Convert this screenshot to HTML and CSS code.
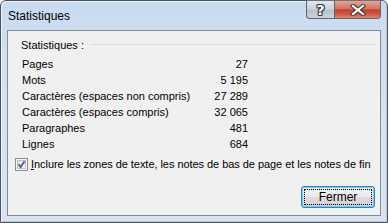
FILE: index.html
```html
<!DOCTYPE html>
<html lang="fr">
<head>
<meta charset="utf-8">
<title>Statistiques</title>
<link rel="stylesheet" href="styles.css">
</head>
<body>
<div class="window">
  <div class="titlebar">
    <div class="title">Statistiques</div>
    <div class="caption-buttons">
      <div class="cap-btn help"><span class="help-glyph">?</span></div>
      <div class="cap-btn close">
        <svg width="16" height="12" viewBox="0 0 16 12">
          <path d="M3 2 L13 10 M13 2 L3 10" stroke="#3b3b3b" stroke-width="4.2" stroke-linecap="square" fill="none"/>
          <path d="M3 2 L13 10 M13 2 L3 10" stroke="#ffffff" stroke-width="2.2" stroke-linecap="square" fill="none"/>
        </svg>
      </div>
    </div>
  </div>
  <div class="client">
    <div class="section-head">
      <span class="section-label">Statistiques :</span>
      <span class="section-line"></span>
    </div>
    <div class="stats">
      <div class="stat-label">Pages</div><div class="stat-value">27</div>
      <div class="stat-label">Mots</div><div class="stat-value">5 195</div>
      <div class="stat-label">Caractères (espaces non compris)</div><div class="stat-value">27 289</div>
      <div class="stat-label">Caractères (espaces compris)</div><div class="stat-value">32 065</div>
      <div class="stat-label">Paragraphes</div><div class="stat-value">481</div>
      <div class="stat-label">Lignes</div><div class="stat-value">684</div>
    </div>
    <label class="check-row">
      <span class="checkbox">
        <svg width="13" height="13" viewBox="0 0 13 13">
          <defs>
            <linearGradient id="cbg" x1="0" y1="0" x2="1" y2="1">
              <stop offset="0" stop-color="#dcdcdc"/>
              <stop offset="1" stop-color="#fbfbfb"/>
            </linearGradient>
          </defs>
          <rect x="0.5" y="0.5" width="12" height="12" fill="#f4f4f4" stroke="#8e8f8f"/>
          <rect x="2.5" y="2.5" width="8" height="8" fill="url(#cbg)" stroke="#c2c2c2" stroke-width="1"/>
          <path d="M3.5 6.3 L5.6 9 L9.6 3.2" stroke="#4a5f97" stroke-width="1.8" fill="none"/>
        </svg>
      </span>
      <span class="check-text"><u>I</u>nclure les zones de texte, les notes de bas de page et les notes de fin</span>
    </label>
    <div class="button-row">
      <button class="btn-default" type="button"><span class="focus-rect">Fermer</span></button>
    </div>
  </div>
</div>
</body>
</html>
```
FILE: styles.css
```css
html, body {
  margin: 0;
  padding: 0;
  background: #ffffff;
}

body {
  font-family: "Liberation Sans", Arial, sans-serif;
  font-size: 11px;
  color: #000;
}

.window {
  width: 388px;
  height: 223px;
  box-sizing: border-box;
  border: 1px solid #4b525b;
  border-radius: 6px 6px 0 0;
  background: linear-gradient(to bottom, #c9dbef 0%, #d3e2f3 40%, #d7e4f3 100%);
  box-shadow: inset 1px 1px 0 #eef4fb, inset -1px -1px 0 #b9c9dc;
  display: flex;
  flex-direction: column;
  padding: 0 6px 6px 6px;
}

.titlebar {
  height: 29px;
  display: flex;
  justify-content: space-between;
  align-items: flex-start;
}

.title {
  font-size: 12px;
  padding-top: 8px;
  padding-left: 1px;
  color: #000;
}

.caption-buttons {
  display: flex;
  margin-top: -1px;
}

.cap-btn {
  height: 19px;
  box-sizing: border-box;
  border: 1px solid #5c6673;
  border-top-color: #6b7480;
  display: flex;
  align-items: center;
  justify-content: center;
}

.help {
  width: 28px;
  border-right: none;
  border-radius: 0 0 0 4px;
  background: linear-gradient(to bottom, #dfe6ee 0%, #c7d1dc 50%, #b5c1cd 51%, #c7d3df 100%);
}

.help-glyph {
  font-family: "DejaVu Sans", sans-serif;
  font-weight: bold;
  font-size: 14px;
  line-height: 14px;
  color: #ffffff;
  text-shadow: 1px 0 0 #3b3b3b, -1px 0 0 #3b3b3b, 0 1px 0 #3b3b3b, 0 -1px 0 #3b3b3b,
               1px 1px 0 #3b3b3b, -1px -1px 0 #3b3b3b, 1px -1px 0 #3b3b3b, -1px 1px 0 #3b3b3b;
}

.close {
  width: 47px;
  border-radius: 0 0 4px 0;
  background: linear-gradient(to bottom, #e5a496 0%, #d7735f 45%, #c2402b 52%, #d15a42 80%, #e08a6d 100%);
}

.client {
  flex: 1;
  background: #f0f0f0;
  border: 1px solid #838b95;
  display: flex;
  flex-direction: column;
  padding: 7px 5px 7px 7px;
}

.section-head {
  display: flex;
  align-items: center;
  height: 13px;
  padding-left: 6px;
}

.section-label {
  white-space: nowrap;
}

.section-line {
  flex: 1;
  height: 1px;
  background: #d5dfe5;
  margin-left: 6px;
}

.stats {
  display: grid;
  grid-template-columns: 178px 48px;
  grid-auto-rows: 16px;
  margin-top: 5px;
  padding-left: 7px;
  line-height: 16px;
}

.stat-value {
  text-align: right;
}

.check-row {
  display: flex;
  align-items: center;
  height: 16px;
  margin-top: 4px;
}

.checkbox {
  width: 13px;
  height: 13px;
  display: block;
}

.checkbox svg {
  display: block;
}

.check-text {
  margin-left: 3px;
  white-space: nowrap;
  letter-spacing: -0.05px;
}

.button-row {
  margin-top: auto;
  display: flex;
  justify-content: flex-end;
}

.btn-default {
  width: 74px;
  height: 22px;
  box-sizing: border-box;
  padding: 2px;
  margin: 0;
  border: 1px solid #3c7fb1;
  border-radius: 3px;
  background: linear-gradient(to bottom, #f2f2f2 0%, #ebebeb 50%, #dddddd 51%, #cfcfcf 100%);
  box-shadow: inset 0 0 0 1px #5fd3ff;
  font-family: "Liberation Sans", Arial, sans-serif;
  font-size: 12px;
  color: #000;
  display: flex;
}

.focus-rect {
  flex: 1;
  border: 1px dotted #000;
  display: flex;
  align-items: center;
  justify-content: center;
}
```
